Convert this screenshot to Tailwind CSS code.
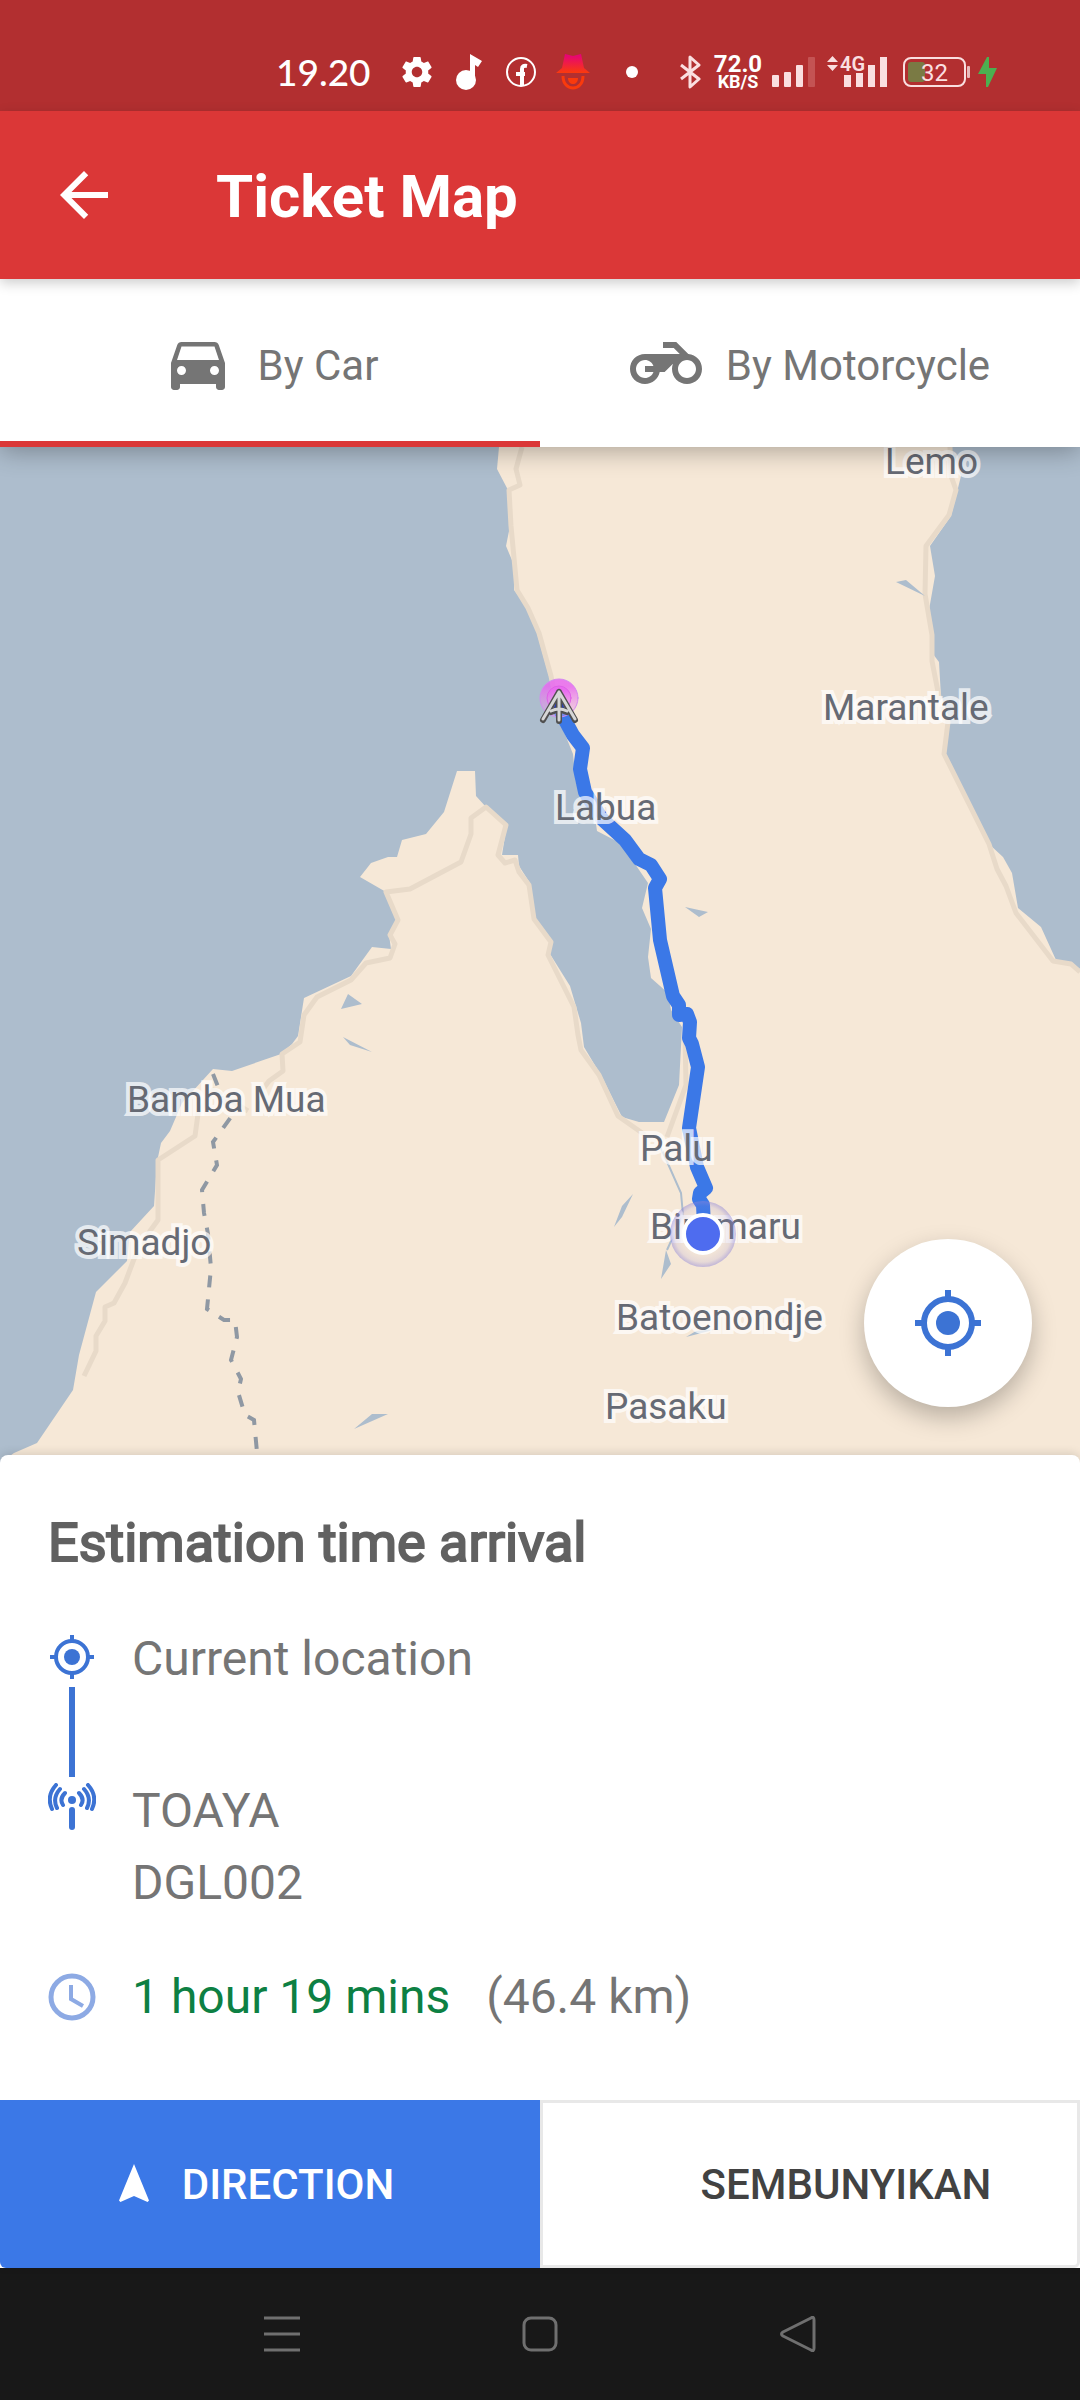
<!DOCTYPE html>
<html lang="id">
<head>
    <meta charset="UTF-8">
    <meta name="viewport" content="width=device-width, initial-scale=1.0">
    <title>Ticket Map</title>
    <script src="https://cdn.jsdelivr.net/npm/@tailwindcss/browser@4"></script>
</head>
<body class="flex min-h-screen flex-col bg-white font-[Roboto,'Liberation_Sans',sans-serif] text-[#757575]">
    <!-- Status bar -->
    <div class="flex h-[111px] items-center bg-[#b22f30] pt-[33px] pl-[276px] text-white">
        <span class="w-[126px] font-[Lato,sans-serif] text-[37px] leading-10 font-medium">19.20</span>
        <div class="flex items-center gap-6">
            <svg class="size-[30px]" viewBox="2 2 20 20" fill="currentColor"><path d="M19.43 12.98c.04-.32.07-.64.07-.98s-.03-.66-.07-.98l2.11-1.65c.19-.15.24-.42.12-.64l-2-3.46c-.12-.22-.39-.3-.61-.22l-2.49 1c-.52-.4-1.08-.73-1.69-.98l-.38-2.65C14.46 2.18 14.25 2 14 2h-4c-.25 0-.46.18-.49.42l-.38 2.65c-.61.25-1.17.59-1.69.98l-2.49-1c-.23-.09-.49 0-.61.22l-2 3.46c-.13.22-.07.49.12.64l2.11 1.65c-.04.32-.07.65-.07.98s.03.66.07.98l-2.11 1.65c-.19.15-.24.42-.12.64l2 3.46c.12.22.39.3.61.22l2.49-1c.52.4 1.08.73 1.69.98l.38 2.65c.03.24.24.42.49.42h4c.25 0 .46-.18.49-.42l.38-2.65c.61-.25 1.17-.59 1.69-.98l2.49 1c.23.09.49 0 .61-.22l2-3.46c.12-.22.07-.49-.12-.64l-2.11-1.65zM12 15.500c-1.930 0-3.500-1.570-3.500-3.500s1.570-3.500 3.500-3.500 3.500 1.570 3.500 3.500-1.570 3.500-3.500 3.500z"/></svg>
            <svg class="h-9 w-[26px]" viewBox="0 0 26 36" fill="currentColor"><circle cx="10" cy="26" r="10"/><path d="M14 0l12 7-4 6-3-2v15h-5z"/></svg>
            <svg class="size-[30px]" viewBox="0 0 30 30" fill="none" stroke="currentColor"><circle cx="15" cy="15" r="14" stroke-width="2"/><path d="M16 29V12q0-4 5-3M10 17h9" stroke-width="4"/></svg>
            <svg class="-ml-1 h-9 w-[34px]" viewBox="0 0 34 36">
                <defs><linearGradient id="hat" x1="0" y1="0" x2="0" y2="1"><stop offset="0" stop-color="#e5007d"/><stop offset="1" stop-color="#fa3a0c"/></linearGradient></defs>
                <path d="M9 0l8 2 8-2 3 14 6 5H0l6-5z" fill="url(#hat)"/>
                <path d="M7 22c0 16 20 16 20 0" fill="none" stroke="#fa3a0c" stroke-width="3"/>
                <path d="M12 24h10c0 8-10 8-10 0z" fill="#fa3a0c"/>
            </svg>
        </div>
        <span class="ml-9 size-3 rounded-full bg-white"></span>
        <svg class="ml-[42px] h-[34px] w-[21px] text-[#fadfe0]" viewBox="0 0 21 34" fill="none" stroke="currentColor" stroke-width="3" stroke-linejoin="round"><path d="M1 10l18 14-9 8V2l9 8L1 24"/></svg>
        <div class="ml-3 w-[50px] text-center font-bold">
            <div class="text-[24px] leading-5">72.0</div>
            <div class="text-[18px] leading-4">KB/S</div>
        </div>
        <svg class="ml-[9px] h-[30px] w-[43px]" viewBox="0 0 43 30" fill="#fadfe0"><rect y="18" width="7" height="12" rx="1"/><rect x="12" y="15" width="7" height="15" rx="1"/><rect x="24" y="8" width="7" height="22" rx="1"/><rect x="36" width="7" height="30" rx="1" fill="#c45353"/></svg>
        <svg class="ml-3 h-[34px] w-[60px] overflow-visible" viewBox="0 0 60 34" fill="#fadfe0">
            <path d="M0 7l5.500-6L11 7zM0 10h11l-5.500 6z"/>
            <text x="13" y="16" font-size="20" font-weight="600">4G</text>
            <path d="M17 20h7v12h-7zM29 18h7v14h-7zM41 10h7v22h-7zM53 2h7v30h-7z"/>
        </svg>
        <svg class="ml-4 h-[30px] w-[67px]" viewBox="0 0 67 30">
            <rect x="5" y="5" width="17" height="20" rx="3" fill="#7a7a44"/>
            <rect x="1" y="1" width="61" height="28" rx="7" fill="none" stroke="#fadfe0" stroke-width="2"/>
            <rect x="64" y="9" width="3" height="12" rx="1" fill="#e9b9ba"/>
            <text x="18" y="24" font-size="24" fill="#fadfe0">32</text>
        </svg>
        <svg class="ml-2 h-[30px] w-[19px]" viewBox="0 0 19 30" fill="#4caf50"><path d="M9 0L0 17h8v13h2l9-19h-8V0z"/></svg>
    </div>

    <!-- App bar -->
    <header class="relative z-20 flex h-[168px] items-center gap-24 bg-[#db3737] px-12 text-white shadow-[0_4px_12px_rgba(0,0,0,0.2)]">
        <button type="button" aria-label="Back">
            <svg class="size-[72px]" viewBox="0 0 24 24" fill="currentColor"><path d="M20 11H7.830l5.590-5.590L12 4l-8 8 8 8 1.410-1.410L7.830 13H20v-2z"/></svg>
        </button>
        <h1 class="pt-1 text-[60px] leading-[72px] font-bold">Ticket Map</h1>
    </header>

    <!-- Travel mode tabs -->
    <nav class="relative z-10 grid h-[168px] grid-cols-2 bg-white text-[42px] shadow-[0_4px_24px_rgba(0,0,0,0.3)]">
        <button type="button" class="flex items-center justify-center gap-6 border-b-6 border-[#db3737] pt-[6px]">
            <svg class="size-[72px]" viewBox="0 0 24 24" fill="currentColor"><path d="M18.920 6.010C18.720 5.420 18.160 5 17.500 5h-11c-.66 0-1.210.42-1.420 1.010L3 12v8c0 .55.45 1 1 1h1c.55 0 1-.45 1-1v-1h12v1c0 .55.45 1 1 1h1c.55 0 1-.45 1-1v-8l-2.080-5.990zM6.500 16c-.83 0-1.500-.67-1.500-1.500S5.670 13 6.500 13s1.500.67 1.500 1.500S7.330 16 6.500 16zm11 0c-.83 0-1.500-.67-1.500-1.500s.67-1.500 1.500-1.500 1.500.67 1.500 1.500-.67 1.500-1.500 1.500zM5 11l1.500-4.500h11L19 11H5z"/></svg>
            <span class="pt-1">By Car</span>
        </button>
        <button type="button" class="flex items-center justify-center gap-6">
            <svg class="size-[72px]" viewBox="0 0 24 24" fill="currentColor"><path d="M19.440 9.030L15.410 5H11v2h3.590l2 2H5c-2.800 0-5 2.200-5 5s2.200 5 5 5c2.460 0 4.450-1.690 4.900-4h1.650l2.770-2.770c-.21.54-.32 1.140-.32 1.770 0 2.800 2.200 5 5 5s5-2.200 5-5c0-2.650-1.970-4.770-4.560-4.970zM7.820 15C7.400 16.150 6.280 17 5 17c-1.630 0-3-1.370-3-3s1.370-3 3-3c1.280 0 2.400.85 2.820 2H5v2h2.820zM19 17c-1.660 0-3-1.340-3-3s1.340-3 3-3 3 1.340 3 3-1.340 3-3 3z"/></svg>
            <span class="pt-1">By Motorcycle</span>
        </button>
    </nav>

    <!-- Map -->
    <main class="relative min-h-0 flex-1 overflow-hidden bg-[#adbdcd]">
        <svg class="block h-full w-full" viewBox="0 447 1080 1016" preserveAspectRatio="xMidYMid slice">
            <defs>
                <radialGradient id="halo"><stop offset="0.6" stop-color="#8d84d8" stop-opacity="0.02"/><stop offset="0.85" stop-color="#8d84d8" stop-opacity="0.15"/><stop offset="1" stop-color="#8d84d8" stop-opacity="0.5"/></radialGradient>
                <linearGradient id="signal" x1="0" y1="0" x2="0" y2="1"><stop offset="0.2" stop-color="#e868f0" stop-opacity="0.85"/><stop offset="1" stop-color="#e8a8e8" stop-opacity="0.3"/></linearGradient>
            </defs>
            <rect y="447" width="1080" height="1016" fill="#adbdcd"/>
            <!-- land -->
            <path fill="#f6e8d7" d="M0 1463L14 1453 37 1443 73 1390 79 1355 96 1292 127 1261 130 1232 154 1206 157 1162 161 1143 170 1131 182 1103 213 1069 232 1071 281 1054 292 1044 298 1036 304 998 351 976 372 947 391 949 389 935 398 920 386 892 360 877 371 863 388 857 397 857 402 840 426 834 444 812 457 771 475 771 476 796 486 807 507 824 502 855 518 855 519 866 530 883 534 918 551 940 550 954 570 986 581 1023 584 1047 602 1077 622 1117 639 1122 664 1122 679 1085 682 1027 671 1010 668 993 651 978 648 957 651 929 642 908 648 883 633 861 622 844 597 831 596 824 576 783 573 754 560 722 553 690 549 676 537 633 528 608 514 590 514 565 506 546 510 526 508 490 497 469 499 447H950L961 476 951 516 930 546 935 576 929 610 933 654 939 662 941 697 949 722 945 754 989 844 1003 857 1012 873 1018 908 1041 927 1056 960 1071 963 1080 969V1463z"/>
            <!-- roads -->
            <g fill="none" stroke="#e8dac9" stroke-width="5" stroke-linejoin="round">
                <path d="M84 1376L96 1351V1336L105 1321V1307L114 1303 125 1283 134 1259 150 1231 158 1220V1160L195 1136 198 1114 213 1090 248 1111M263 1089L269 1081 283 1071 282 1054 300 1042 304 1015 317 997 351 980 366 963 390 958 395 944 390 935 398 920 386 892 410 889 461 862 471 834V818L486 807 506 825 498 855 505 863 515 860 519 872 529 885 534 919 551 942 548 955 574 1007 578 1035 581 1050 599 1075 618 1116 645 1135"/>
                <path d="M667 1137L686 1085 685 1037M522 447L516 469 520 485 509 490 511 526 514 558 517 590 528 608 539 633 551 676 560 720"/>
                <path d="M950 447L951 476 956 490 949 515 926 546 925 594 932 635 932 661 939 697 948 722 944 754 989 844 997 869 1006 886 1016 913 1053 961 1071 964 1080 972"/>
            </g>
            <!-- district border -->
            <path fill="none" stroke="#8f98a3" stroke-width="4" stroke-dasharray="12 12" d="M213 1074L219 1089 231 1117 213 1142 217 1165 202 1190 204 1213 208 1234 211 1268 207 1309 224 1320 235 1320 237 1337 231 1360 241 1379 238 1392 245 1415 254 1420 258 1463"/>
            <!-- lakes -->
            <path fill="#adbdcd" d="M348 994L362 1004 341 1009zM343 1037L372 1052 350 1045zM354 1429L388 1414H372zM685 907L708 912 699 917zM896 582L906 580 925 596zM633 1194L622 1217 614 1227 622 1206zM666 1250L671 1264 661 1279zM686 1337L696 1331 717 1329z"/>
            <path fill="none" stroke="#adbdcd" stroke-width="2" d="M661 1148L681 1193 683 1215 667 1250"/>
            <!-- route -->
            <path fill="none" stroke="#3b78e7" stroke-width="14" stroke-linejoin="round" d="M558 706L566 722 573 735 583 748 580 769 585 792 602 819 625 840 639 859 651 865 660 879 655 888 660 940 673 996 679 1005 679 1015 687 1014 690 1022 689 1038 692 1044 698 1067 689 1128 697 1167 706 1188 700 1193 699 1199 703 1205 704 1225"/>
            <g font-size="37" fill="#666a74" stroke="#ffffff" stroke-opacity="0.7" stroke-width="8" paint-order="stroke">
                <text x="885" y="474">Lemo</text>
                <text x="823" y="720">Marantale</text>
                <text x="555" y="820">Labua</text>
                <text x="127" y="1112">Bamba Mua</text>
                <text x="77" y="1255">Simadjo</text>
                <text x="640" y="1161">Palu</text>
                <text x="650" y="1239">Biromaru</text>
                <text x="616" y="1330">Batoenondje</text>
                <text x="605" y="1419">Pasaku</text>
            </g>
            <!-- tower marker -->
            <g fill="none" stroke-linecap="round">
                <circle cx="559" cy="698" r="19" fill="url(#signal)" stroke="#d48af0"/>
                <circle cx="559" cy="698" r="12" fill="url(#signal)" stroke="#e060e8"/>
                <path d="M559 694l-7 18h14z" fill="#2a3fae"/>
                <path d="M559 692l-16 28M559 692l16 28M559 692v29M551 712q8-4 16 0" stroke="#505050" stroke-width="6"/>
                <path d="M559 692l-16 27M559 692l16 27M559 692v28M551 711q8-4 16 0" stroke="#d6d6d6" stroke-width="3"/>
            </g>
            <!-- current position -->
            <circle cx="703" cy="1234" r="33" fill="url(#halo)"/>
            <circle cx="703" cy="1234" r="19" fill="#4e6cef" stroke="#ffffff" stroke-width="4"/>
        </svg>
        <button type="button" aria-label="My location" class="absolute right-12 bottom-14 flex size-[168px] items-center justify-center rounded-full bg-white text-[#3c73d4] shadow-[0_10px_24px_rgba(0,0,0,0.25)]">
            <svg class="size-[72px]" viewBox="0 0 24 24" fill="none" stroke="currentColor" stroke-width="2"><circle cx="12" cy="12" r="8"/><circle cx="12" cy="12" r="4" fill="currentColor" stroke="none"/><path d="M12 1v3M12 20v3M1 12h3M20 12h3"/></svg>
        </button>
    </main>

    <!-- Arrival sheet -->
    <section class="relative -mt-2 rounded-t-lg bg-white shadow-[0_-2px_10px_rgba(0,0,0,0.12)]">
        <div class="px-12 pt-14 pb-[67px] text-[48px] leading-[72px]">
            <h2 class="text-[54px] leading-16 text-[#616161] [-webkit-text-stroke:2px_#616161]">Estimation time arrival</h2>
            <div class="mt-12 flex gap-9">
                <div class="flex w-12 flex-col items-center gap-[6px] pt-[10px] text-[#3c73d4]">
                    <svg class="size-12" viewBox="0 0 24 24" fill="none" stroke="currentColor" stroke-width="2"><circle cx="12" cy="12" r="8"/><circle cx="12" cy="12" r="4" fill="currentColor" stroke="none"/><path d="M12 1v3M12 20v3M1 12h3M20 12h3"/></svg>
                    <div class="h-[90px] w-[6px] bg-[#3c73d4]"></div>
                    <svg class="size-12" viewBox="0 0 48 48" fill="none" stroke="currentColor" stroke-width="4" stroke-linecap="round"><circle cx="24" cy="17" r="4" fill="currentColor" stroke="none"/><path d="M24 27v17" stroke-width="6"/><path d="M17 10q-6 6-2 12M12 6q-8 9-3 19M8 2q-10 11-4 24M31 10q6 6 2 12M36 6q8 9 3 19M40 2q10 11 4 24"/></svg>
                </div>
                <div class="flex flex-col gap-20">
                    <p>Current location</p>
                    <p>TOAYA<br>DGL002</p>
                </div>
            </div>
            <div class="mt-[42px] flex items-center gap-9">
                <svg class="size-12 text-[#8daae4]" viewBox="0 0 48 48" fill="none" stroke="currentColor"><circle cx="24" cy="24" r="21" stroke-width="5"/><path d="M23 12v14l12 7" stroke-width="4"/></svg>
                <p><span class="text-[#0d8043]">1 hour 19 mins</span><span class="ml-9">(46.4 km)</span></p>
            </div>
        </div>
        <div class="grid h-[168px] grid-cols-2 text-[42px] font-medium">
            <button type="button" class="flex items-center justify-center gap-6 rounded-bl-md bg-[#3b78e7] pr-9 text-white">
                <svg class="size-12" viewBox="0 0 24 24" fill="currentColor"><path d="M12 2L4.500 20.290l.71.71L12 18l6.790 3 .71-.71z"/></svg>
                DIRECTION
            </button>
            <button type="button" class="rounded-br-md border-3 border-[#e8e8e8] pl-[72px] text-[#424242]">SEMBUNYIKAN</button>
        </div>
    </section>

    <!-- System navigation -->
    <footer class="flex h-[132px] items-center justify-center gap-[222px] bg-[#181818] text-[#6f6f6f]">
        <button type="button" aria-label="Recent apps"><svg class="size-9" viewBox="0 0 36 36" fill="none" stroke="currentColor" stroke-width="3"><path d="M0 2h36M0 18h36M0 34h36"/></svg></button>
        <button type="button" aria-label="Home"><svg class="size-9" viewBox="0 0 36 36" fill="none" stroke="currentColor" stroke-width="3"><rect x="2" y="2" width="32" height="32" rx="7"/></svg></button>
        <button type="button" aria-label="Back"><svg class="size-9" viewBox="0 0 36 36" fill="none" stroke="currentColor" stroke-width="3" stroke-linejoin="round"><path d="M31 2Q34 0 34 4V32Q34 36 31 34L3 20Q0 18 3 16z"/></svg></button>
    </footer>
</body>
</html>
